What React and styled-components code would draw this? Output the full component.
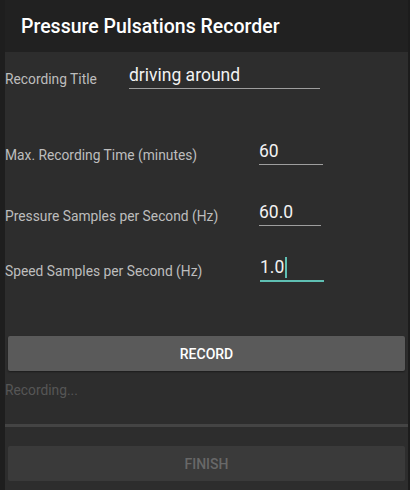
import styled, { createGlobalStyle } from "styled-components";

const Global = createGlobalStyle`
  html, body {
    margin: 0;
    padding: 0;
    background: #1e1e1e;
    font-family: Roboto, "Liberation Sans", sans-serif;
  }
`;

const Screen = styled.div`
  display: flex;
  flex-direction: column;
  width: 403px;
  height: 490px;
  margin-left: 5px;
  background-color: #2d2d2d;
  border-right: 2px solid #1c1c1c;
`;

const AppBar = styled.div`
  display: flex;
  align-items: center;
  height: 52px;
  padding-left: 16px;
  background-color: #212121;
  color: #ffffff;
  font-size: 19.5px;
  font-weight: 500;
`;

const Field = styled.div`
  display: flex;
  align-items: flex-end;
  height: ${({ h }) => h}px;
`;

const Label = styled.div`
  width: ${({ w }) => w}px;
  padding-bottom: 3px;
  line-height: 16px;
  font-size: 13.8px;
  color: #bdbdbd;
`;

const Input = styled.div`
  display: flex;
  align-items: center;
  width: ${({ w }) => w}px;
  height: 20px;
  padding-bottom: 3px;
  border-bottom: ${({ focused }) =>
    focused ? "2px solid #5fbfb3" : "1px solid #9e9e9e"};
  font-size: 17.5px;
  color: #f2f2f2;
  margin-bottom: ${({ focused }) => (focused ? "0" : "1px")};
`;

const Cursor = styled.span`
  display: inline-block;
  width: 2px;
  height: 21px;
  margin-left: 1px;
  background-color: #5fbfb3;
`;

const Spacer = styled.div`
  height: ${({ h }) => h}px;
`;

const Button = styled.div`
  display: flex;
  align-items: center;
  justify-content: center;
  margin: 0 3px;
  height: 35px;
  border-radius: 2px;
  background-color: ${({ disabled }) => (disabled ? "#3a3a3a" : "#5a5a5a")};
  color: ${({ disabled }) => (disabled ? "#686868" : "#ffffff")};
  font-size: 14px;
  font-weight: 500;
  box-shadow: ${({ disabled }) => (disabled ? "none" : "0 1px 2px rgba(0,0,0,0.4)")};
`;

const Status = styled.div`
  margin-top: 11px;
  height: 20px;
  font-size: 13.8px;
  color: #565656;
`;

const Divider = styled.div`
  margin-top: 22px;
  height: 3px;
  background-color: #444444;
`;

export default function App() {
  return (
    <>
      <Global />
      <Screen>
        <AppBar>Pressure Pulsations Recorder</AppBar>
        <Field h={38}>
          <Label w={124}>Recording Title</Label>
          <Input w={191}>driving around</Input>
        </Field>
        <Field h={76}>
          <Label w={254}>Max. Recording Time (minutes)</Label>
          <Input w={64}>60</Input>
        </Field>
        <Field h={61}>
          <Label w={254}>Pressure Samples per Second (Hz)</Label>
          <Input w={62}>60.0</Input>
        </Field>
        <Field h={55}>
          <Label w={255}>Speed Samples per Second (Hz)</Label>
          <Input w={64} focused>
            1.0<Cursor />
          </Input>
        </Field>
        <Spacer h={54} />
        <Button>RECORD</Button>
        <Status>Recording...</Status>
        <Divider />
        <Spacer h={19} />
        <Button disabled>FINISH</Button>
      </Screen>
    </>
  );
}
